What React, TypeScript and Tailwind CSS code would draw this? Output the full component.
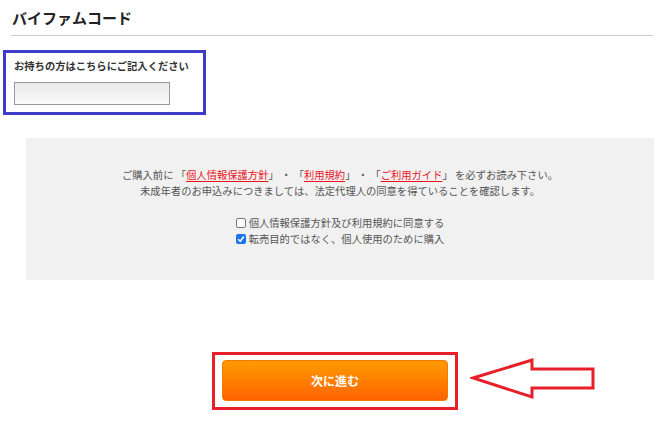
import React from "react";

const FONT = "font-['Noto_Sans_CJK_JP','Noto_Sans',sans-serif]";

function Box({ checked }: { checked?: boolean }) {
  if (checked) {
    return (
      <span className="w-[10px] h-[10px] rounded-[2px] bg-[#1a73e8] flex items-center justify-center shrink-0">
        <svg width="8" height="8" viewBox="0 0 8 8">
          <path d="M1.2 4.2 L3.2 6.2 L6.8 1.6" stroke="#fff" strokeWidth="1.6" fill="none" />
        </svg>
      </span>
    );
  }
  return <span className="w-[10px] h-[10px] rounded-[2px] border border-[#767676] bg-white shrink-0" />;
}

function Link({ children }: { children: React.ReactNode }) {
  return <span className="text-[#e8141c] underline underline-offset-2">{children}</span>;
}

export default function App() {
  return (
    <div className={`w-[664px] h-[421px] bg-white overflow-hidden [text-spacing-trim:space-all] ${FONT}`}>
      <div className="h-[35px] pl-[12px] pt-[8px] text-[15px] font-bold text-[#222] leading-[20px]">バイファムコード</div>
      <div className="mx-[11px] h-px bg-[#cccccc]" />

      <div className="mt-[14px] ml-[3px] w-[203px] h-[65px] border-[3px] border-[#3d3dc8] pl-[8px] pt-[6px]">
        <div className="text-[10.3px] font-bold text-[#333] leading-[14px]">お持ちの方はこちらにご記入ください</div>
        <div className="mt-[9px] w-[156px] h-[23px] border border-[#999] bg-gradient-to-b from-[#e9e9e9] to-[#fafafa]" />
      </div>

      <div className="mt-[23px] ml-[26px] w-[628px] h-[142px] bg-[#f1f1f1] pt-[29px] text-[10.3px] text-[#555] leading-[16px]">
        <p className="text-center">
          ご購入前に 「<Link>個人情報保護方針</Link>」 ・ 「<Link>利用規約</Link>」 ・ 「<Link>ご利用ガイド</Link>」 を必ずお読み下さい。
        </p>
        <p className="text-center">未成年者のお申込みにつきましては、法定代理人の同意を得ていることを確認します。</p>
        <div className="mt-[16px] mx-auto w-fit flex flex-col items-start">
          <label className="flex items-center gap-[3px] h-[16px]">
            <Box />
            <span>個人情報保護方針及び利用規約に同意する</span>
          </label>
          <label className="flex items-center gap-[3px] h-[16px]">
            <Box checked />
            <span>転売目的ではなく、個人使用のために購入</span>
          </label>
        </div>
      </div>

      <div className="mt-[72px] flex items-center">
        <div className="ml-[212px] w-[246px] h-[58px] border-[3px] border-[#e8202a] pl-[7px] pt-[5px]">
          <button className="w-[226px] h-[41px] rounded-[4px] border border-[#f27a00] bg-gradient-to-b from-[#ff9a00] to-[#ff6200] text-white text-[12px] font-bold">
            次に進む
          </button>
        </div>
        <svg width="130" height="50" viewBox="0 0 130 50" className="ml-[12px]">
          <polygon
            points="3,22 62,4 62,13 123,13 123,32 62,32 62,41"
            fill="#fff"
            stroke="#e8202a"
            strokeWidth="3"
            strokeLinejoin="miter"
          />
        </svg>
      </div>
    </div>
  );
}
